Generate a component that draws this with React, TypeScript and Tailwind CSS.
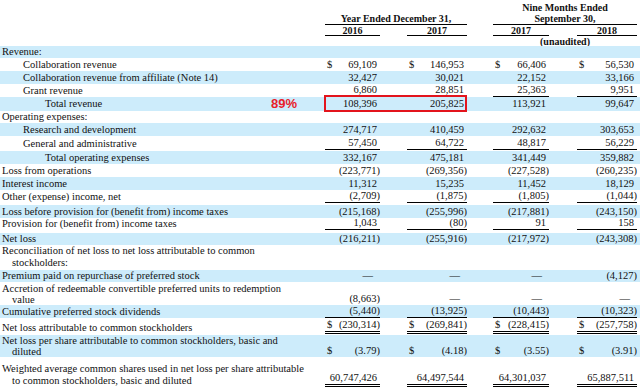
import React from 'react';

type V = string | null;

interface RowDef {
  lines: string[];
  indent?: 0 | 1 | 2;
  band?: boolean;
  h: string;
  vals?: [V, V, V, V];
  dollar?: boolean;
  ul?: 's' | 'd';
  pb?: string;
  box?: boolean;
  tight?: boolean;
}

const COLS = ['w-[55px]', 'ml-[27px] w-[60px]', 'ml-[26px] w-[56px]', 'ml-[28px] w-[60px]'];
const INDENT = ['pl-[2px]', 'pl-[23px]', 'pl-[45px]'];

const ROWS: RowDef[] = [
  { lines: ['Revenue:'], band: true, h: 'h-[12px]' },
  { lines: ['Collaboration revenue'], indent: 1, h: 'h-[13px]', vals: ['69,109', '146,953', '66,406', '56,530'], dollar: true },
  { lines: ['Collaboration revenue from affiliate (Note 14)'], indent: 1, band: true, h: 'h-[13px]', vals: ['32,427', '30,021', '22,152', '33,166'] },
  { lines: ['Grant revenue'], indent: 1, h: 'h-[13px]', vals: ['6,860', '28,851', '25,363', '9,951'], ul: 's' },
  { lines: ['Total revenue'], indent: 2, band: true, h: 'h-[14px]', vals: ['108,396', '205,825', '113,921', '99,647'], pb: 'pb-[1px]', box: true },
  { lines: ['Operating expenses:'], h: 'h-[12px]' },
  { lines: ['Research and development'], indent: 1, band: true, h: 'h-[13px]', vals: ['274,717', '410,459', '292,632', '303,653'] },
  { lines: ['General and administrative'], indent: 1, h: 'h-[15px]', vals: ['57,450', '64,722', '48,817', '56,229'], ul: 's', pb: 'pb-[1px]' },
  { lines: ['Total operating expenses'], indent: 2, band: true, h: 'h-[13px]', vals: ['332,167', '475,181', '341,449', '359,882'] },
  { lines: ['Loss from operations'], h: 'h-[13px]', vals: ['(223,771)', '(269,356)', '(227,528)', '(260,235)'] },
  { lines: ['Interest income'], band: true, h: 'h-[13px]', vals: ['11,312', '15,235', '11,452', '18,129'] },
  { lines: ['Other (expense) income, net'], h: 'h-[15px]', vals: ['(2,709)', '(1,875)', '(1,805)', '(1,044)'], ul: 's', pb: 'pb-[2px]' },
  { lines: ['Loss before provision for (benefit from) income taxes'], band: true, h: 'h-[13px]', vals: ['(215,168)', '(255,996)', '(217,881)', '(243,150)'] },
  { lines: ['Provision for (benefit from) income taxes'], h: 'h-[15px]', vals: ['1,043', '(80)', '91', '158'], ul: 's', pb: 'pb-[3px]' },
  { lines: ['Net loss'], band: true, h: 'h-[12px]', vals: ['(216,211)', '(255,916)', '(217,972)', '(243,308)'] },
  { lines: ['Reconciliation of net loss to net loss attributable to common', 'stockholders:'], h: 'h-[25px]', pb: 'pb-[1px]' },
  { lines: ['Premium paid on repurchase of preferred stock'], band: true, h: 'h-[12px]', vals: ['—', '—', '—', '(4,127)'] },
  { lines: ['Accretion of redeemable convertible preferred units to redemption', 'value'], h: 'h-[23px]', vals: ['(8,663)', '—', '—', '—'], tight: true },
  { lines: ['Cumulative preferred stock dividends'], band: true, h: 'h-[13px]', vals: ['(5,440)', '(13,925)', '(10,443)', '(10,323)'], ul: 's' },
  { lines: ['Net loss attributable to common stockholders'], h: 'h-[17px]', vals: ['(230,314)', '(269,841)', '(228,415)', '(257,758)'], dollar: true, ul: 'd', pb: 'pb-[1px]' },
  { lines: ['Net loss per share attributable to common stockholders, basic and', 'diluted'], band: true, h: 'h-[22px]', vals: ['(3.79)', '(4.18)', '(3.55)', '(3.91)'], dollar: true, tight: true },
  { lines: ['Weighted average common shares used in net loss per share attributable', 'to common stockholders, basic and diluted'], h: 'h-[32px]', vals: ['60,747,426', '64,497,544', '64,301,037', '65,887,511'], ul: 'd', pb: 'pb-[2px]' },
];

function Num({ v }: { v: string }) {
  const pad = v === '—' ? 'pr-[7px]' : v.endsWith(')') ? 'pr-0' : 'pr-[3px]';
  return <span className={pad}>{v}</span>;
}

function Row({ r }: { r: RowDef }) {
  const ulCls = r.ul === 's' ? 'border-b border-black' : r.ul === 'd' ? 'border-b-[3px] border-double border-black' : '';
  return (
    <div className={`relative flex items-end pr-[3px] ${r.h} ${r.pb ?? ''} ${r.band ? 'bg-[#cdecfb]' : ''}`}>
      <div className={`flex-1 ${INDENT[r.indent ?? 0]}`}>
        {r.lines.map((l, i) => (
          <div
            key={i}
            className={`whitespace-nowrap ${i > 0 ? 'pl-[10px]' : ''} ${r.tight ? 'h-[11px] leading-[11px]' : 'h-[12px]'}`}
          >
            {l}
          </div>
        ))}
      </div>
      {r.vals &&
        r.vals.map((v, i) => (
          <div key={i} className={`flex h-[12px] items-end justify-between box-content ${COLS[i]} ${ulCls}`}>
            <span className="pl-[2px]">{r.dollar ? '$' : ''}</span>
            {v && <Num v={v} />}
          </div>
        ))}
      {r.box && (
        <>
          <span className="absolute left-[271px] top-[0px] text-[13px] leading-[14px] font-bold text-[#e8202a] [font-family:'Liberation_Sans',Arial,sans-serif]">
            89%
          </span>
          <div className="absolute left-[324px] top-[-2px] h-[17px] w-[143px] border-2 border-[#e3141c]" />
        </>
      )}
    </div>
  );
}

export default function App() {
  return (
    <div className="h-[391px] w-[640px] overflow-hidden bg-white text-[10.5px] leading-[12px] text-[#111] [font-family:'Liberation_Serif','Times_New_Roman',serif]">
      {/* Column headers */}
      <div className="flex h-[46px] pr-[3px] text-[10px] font-bold">
        <div className="flex-1" />
        <div className="flex w-[142px] flex-col pt-[13px]">
          <div className="h-[12px] border-b border-black text-center">Year Ended December 31,</div>
          <div className="flex pt-[1px]">
            <div className="h-[10px] w-[55px] border-b border-black text-center leading-[10px]">2016</div>
            <div className="ml-[27px] h-[10px] w-[60px] border-b border-black text-center leading-[10px]">2017</div>
          </div>
        </div>
        <div className="ml-[26px] flex w-[144px] flex-col pt-[2px]">
          <div className="h-[11px] text-center leading-[11px]">Nine Months Ended</div>
          <div className="h-[12px] border-b border-black text-center">September 30,</div>
          <div className="flex pt-[1px]">
            <div className="h-[10px] w-[56px] border-b border-black text-center leading-[10px]">2017</div>
            <div className="ml-[28px] h-[10px] w-[60px] border-b border-black text-center leading-[10px]">2018</div>
          </div>
          <div className="h-[10px] pt-[1px] text-center leading-[10px]">(unaudited)</div>
        </div>
      </div>
      {ROWS.map((r, i) => (
        <Row key={i} r={r} />
      ))}
    </div>
  );
}
